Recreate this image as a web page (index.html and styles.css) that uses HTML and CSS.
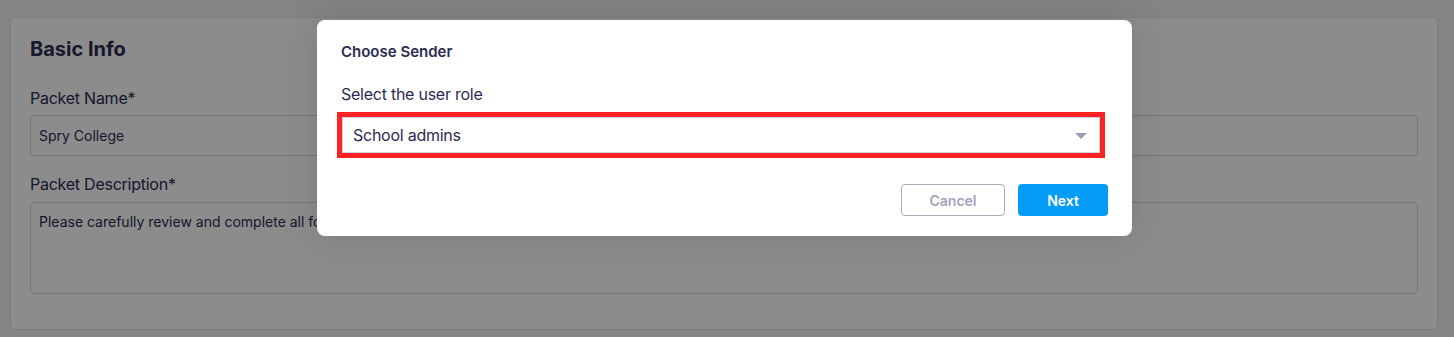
FILE: index.html
```html
<!DOCTYPE html>
<html>
<head>
<meta charset="utf-8">
<link rel="stylesheet" href="styles.css">
</head>
<body>
<div class="page">
  <section class="card">
    <h2 class="card-title">Basic Info</h2>
    <label class="field-label">Packet Name*</label>
    <div class="input">Spry College</div>
    <label class="field-label field-label-second">Packet Description*</label>
    <div class="textarea">Please carefully review and complete all forms in this packet.</div>
  </section>
</div>
<div class="overlay">
  <div class="modal">
    <h3 class="modal-title">Choose Sender</h3>
    <div class="modal-label">Select the user role</div>
    <div class="select">
      <span class="select-value">School admins</span>
      <span class="caret"></span>
    </div>
    <div class="actions">
      <button class="btn btn-cancel">Cancel</button>
      <button class="btn btn-next">Next</button>
    </div>
  </div>
</div>
</body>
</html>
```

FILE: styles.css
```css
* { box-sizing: border-box; }
html, body { margin: 0; padding: 0; }
body {
  width: 1454px;
  height: 337px;
  overflow: hidden;
  background: #f0f0f2;
  font-family: Inter, "Noto Sans", sans-serif;
  color: #2b2b52;
  position: relative;
}
.page {
  padding: 17px 16px 0 10px;
}
.card {
  background: #ffffff;
  border: 1px solid #e4e4e8;
  border-radius: 4px;
  height: 313px;
  padding: 19px 19px 0 19px;
}
.card-title {
  margin: 0;
  font-size: 20px;
  line-height: 24px;
  font-weight: 700;
}
.field-label {
  display: block;
  margin-top: 25px;
  font-size: 16px;
  letter-spacing: -0.25px;
  line-height: 24px;
  margin-bottom: 5px;
}
.field-label-second {
  margin-top: 16px;
  margin-bottom: 6px;
}
.input {
  height: 41px;
  border: 1px solid #d6d6e2;
  border-radius: 4px;
  padding: 0 8px;
  font-size: 14px;
  line-height: 39px;
}
.textarea {
  height: 92px;
  border: 1px solid #d6d6e2;
  border-radius: 4px;
  padding: 9px 8px;
  font-size: 14px;
  line-height: 20px;
}
.overlay {
  position: absolute;
  inset: 0;
  background: rgba(0, 0, 0, 0.45);
  display: flex;
  justify-content: center;
  align-items: flex-start;
  padding: 20px 5px 0 0;
}
.modal {
  width: 815px;
  background: #ffffff;
  border-radius: 8px;
  padding: 21px 24px 20px 24px;
  box-shadow: 0 0 40px rgba(0, 0, 0, 0.12);
}
.modal-title {
  margin: 0;
  font-size: 15px;
  line-height: 22px;
  font-weight: 600;
}
.modal-label {
  margin-top: 19px;
  font-size: 16px;
  letter-spacing: -0.25px;
  line-height: 24px;
}
.select {
  margin: 11px 8px 0 1px;
  height: 36px;
  border: 1px solid #cfcfe0;
  outline: 5px solid #ff2222;
  display: flex;
  align-items: center;
  justify-content: space-between;
  padding: 0 12px 0 10px;
  font-size: 16px;
  letter-spacing: -0.25px;
}
.caret {
  width: 0;
  height: 0;
  border-left: 6px solid transparent;
  border-right: 6px solid transparent;
  border-top: 6px solid #9c9cb4;
  margin-top: 2px;
}
.actions {
  margin-top: 31px;
  display: flex;
  justify-content: flex-end;
  gap: 13px;
}
.btn {
  height: 32px;
  border-radius: 4px;
  font-family: Inter, "Noto Sans", sans-serif;
  font-size: 14px;
  font-weight: 600;
  cursor: pointer;
}
.btn-cancel {
  width: 104px;
  background: #ffffff;
  border: 1px solid #aaaabf;
  color: #a3a3b8;
}
.btn-next {
  width: 90px;
  background: #049cf7;
  border: none;
  color: #ffffff;
}
```
